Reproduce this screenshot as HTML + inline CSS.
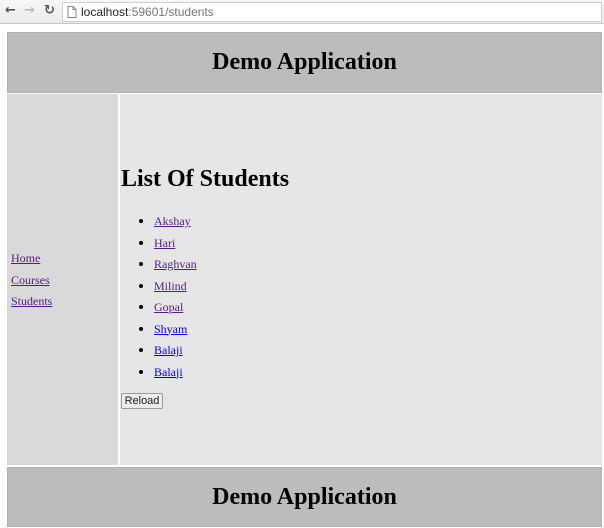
<!DOCTYPE html>
<html><head><meta charset="utf-8"><style>
*{margin:0;padding:0;box-sizing:border-box}
body{width:604px;height:528px;background:#fff;font-family:"Liberation Serif",serif;position:relative;overflow:hidden}
.bar{position:absolute;left:0;top:0;width:604px;height:24px;background:linear-gradient(#f7f7f7,#ececec);border-bottom:1px solid #c8c8c8}
.url{position:absolute;left:62px;top:2px;width:540px;height:20px;background:#fff;border:1px solid #cfcfcf;font-family:"Liberation Sans",sans-serif;font-size:12px;line-height:18px;padding-left:18px;color:#777}
.url b{font-weight:normal;color:#222}
.ic{position:absolute;top:3px;font-family:"DejaVu Sans",sans-serif;font-size:13px;font-weight:bold}
.hdr{position:absolute;left:7px;width:595px;background:#bcbcbc;text-align:center;font-size:24px;font-weight:bold;border:1px solid #b0b0b0}
.side{position:absolute;left:7px;top:94px;width:111px;height:371px;background:#d9d9d9}
.main{position:absolute;left:120px;top:94px;width:482px;height:371px;background:#e6e6e6}
a{color:#551a8b;font-size:12px}
a.u{color:#0000ee}
.side a{position:absolute;left:4px}
h2{position:absolute;left:1px;top:72px;font-size:24px;font-weight:bold;white-space:nowrap}
ul{position:absolute;left:34px;top:119px;list-style:disc}
li{height:21.5px;font-size:13px}
button{position:absolute;left:1px;top:299px;width:42px;height:16px;font-family:"Liberation Sans",sans-serif;font-size:11px;background:#ececec;border:1px solid #9a9a9a;border-radius:2px;color:#222}
</style></head><body>
<div class="bar">
<span class="ic" style="left:5px;color:#555">&#8592;</span>
<span class="ic" style="left:24px;color:#bbb">&#8594;</span>
<span class="ic" style="left:44px;color:#555">&#8635;</span>
<div class="url">
<svg style="position:absolute;left:4px;top:3px" width="10" height="12"><path d="M1 0.5H6L9 3.5V11.5H1Z M6 0.5V3.5H9" fill="#fff" stroke="#888"/></svg>
<b>localhost</b>:59601/students</div>
</div>
<div class="hdr" style="top:32px;height:61px;line-height:58px">Demo Application</div>
<div class="side">
<a href="#" style="top:157px">Home</a>
<a href="#" style="top:179px">Courses</a>
<a href="#" style="top:200px">Students</a>
</div>
<div class="main">
<h2>List Of Students</h2>
<ul>
<li><a href="#">Akshay</a></li>
<li><a href="#">Hari</a></li>
<li><a href="#">Raghvan</a></li>
<li><a href="#">Milind</a></li>
<li><a href="#">Gopal</a></li>
<li><a href="#" class="u">Shyam</a></li>
<li><a href="#" class="u">Balaji</a></li>
<li><a href="#" class="u">Balaji</a></li>
</ul>
<button>Reload</button>
</div>
<div class="hdr" style="top:467px;height:60px;line-height:58px">Demo Application</div>
</body></html>
